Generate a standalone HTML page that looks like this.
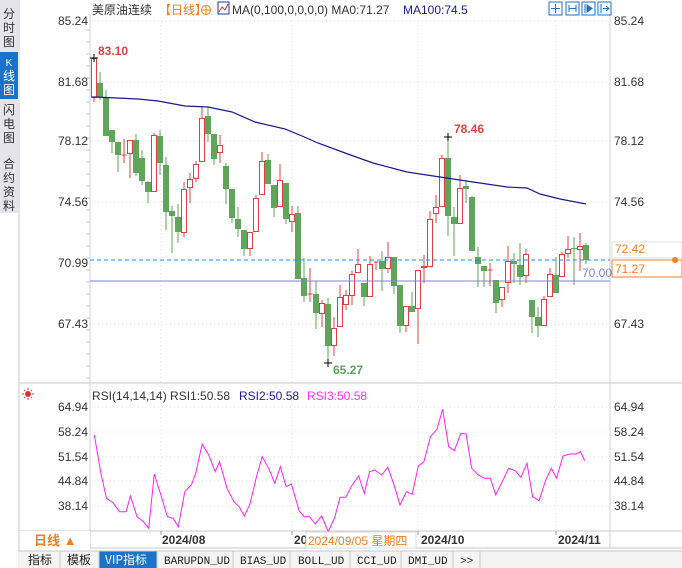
<!DOCTYPE html>
<html><head><meta charset="utf-8"><style>
html,body{margin:0;padding:0;background:#fff;}
body{width:682px;height:568px;position:relative;overflow:hidden;font-family:"Liberation Sans","Noto Sans CJK SC",sans-serif;}
svg{position:absolute;left:0;top:0;}
</style></head><body>
<svg id="s" width="682" height="568" xmlns="http://www.w3.org/2000/svg" font-family="Liberation Sans, Noto Sans CJK SC, sans-serif">
<rect x="0" y="0" width="18" height="213" fill="#e4e4ea"/>
<line x1="19" y1="0" x2="19" y2="552" stroke="#c8c8c8"/>
<rect x="0" y="52" width="18" height="47" fill="#1a73c8"/>
<g font-size="12" text-anchor="middle" fill="#333">
<text x="9" y="18">分</text><text x="9" y="32">时</text><text x="9" y="46">图</text>
<text x="9" y="66" fill="#fff" font-size="10">K</text><text x="9" y="80" fill="#fff">线</text><text x="9" y="94" fill="#fff">图</text>
<text x="9" y="114">闪</text><text x="9" y="128">电</text><text x="9" y="142">图</text>
<text x="9" y="168">合</text><text x="9" y="182">约</text><text x="9" y="196">资</text><text x="9" y="210">料</text>
</g>
<line x1="90" y1="14" x2="90" y2="548" stroke="#d0d0d0"/>
<line x1="610" y1="14" x2="610" y2="548" stroke="#d0d0d0"/>
<line x1="20" y1="383" x2="682" y2="383" stroke="#c8c8c8"/>
<line x1="20" y1="531" x2="682" y2="531" stroke="#c8c8c8"/>
<line x1="90" y1="548" x2="682" y2="548" stroke="#c8c8c8"/>
<g id="grid" stroke="#dcdcdc" stroke-dasharray="1,3"></g>
<g id="candles"></g>
<g font-size="12" fill="#333">
<text x="92" y="14">美原油连续</text>
<text x="159" y="14" fill="#f08020">【日线】</text>
<circle cx="206" cy="10" r="4.5" fill="none" stroke="#f08020"/><line x1="201" y1="10" x2="211" y2="10" stroke="#f08020"/><line x1="206" y1="5" x2="206" y2="15" stroke="#f08020"/>
<rect x="218" y="2" width="11" height="12" fill="#fff" stroke="#1a3c9c"/><path d="M219 12 L222 7 L225 10 L228 4" stroke="#e03030" fill="none"/>
<text x="232" y="14">MA(0,100,0,0,0,0) MA0:71.27</text>
<text x="403" y="14" fill="#1a1a9a">MA100:74.5</text>
</g>
<g stroke="#1a73c8" fill="none">
<rect x="549" y="2" width="13" height="13"/><rect x="566" y="2" width="13" height="13"/><rect x="582" y="2" width="13" height="13"/><rect x="598" y="2" width="13" height="13"/>
<path d="M555.5 4v9M551 8.5h9"/><path d="M569 5v7M576 5v7M569 8.5h7"/><path d="M585 4v9M587 5l5 3.5-5 3.5z" fill="#1a73c8"/><path d="M601 4v9M603 8.5h6M606 6l3 2.5-3 2.5"/>
</g>
<g font-size="12" fill="#333" id="labels"></g>
<text x="98" y="55" font-size="12" font-weight="bold" fill="#e04040">83.10</text>
<text x="454" y="133" font-size="12" font-weight="bold" fill="#e04040">78.46</text>
<text x="333" y="374" font-size="12" font-weight="bold" fill="#60a060">65.27</text>
<line x1="90" y1="260" x2="610" y2="260" stroke="#1a8cff" stroke-dasharray="4,3"/>
<line x1="90" y1="281" x2="610" y2="281" stroke="#8080e0"/>
<text x="582" y="277" font-size="12" fill="#8080e0">70.00</text>
<rect x="612" y="242" width="70" height="16" fill="#fff" stroke="#e0e0e0"/>
<text x="615" y="253" font-size="12" fill="#f08020">72.42</text>
<rect x="612" y="260" width="70" height="17" fill="#fff" stroke="#f08020"/>
<text x="615" y="273" font-size="12" fill="#f08020">71.27</text>
<circle cx="675" cy="260" r="3" fill="#f08020"/>
<g font-size="12">
<circle cx="28" cy="394" r="3" fill="#e03030"/><path d="M22 394h2M32 394h2M28 388v2M28 398v2M24 390l1 1M31 397l1 1M24 398l1-1M31 391l1-1" stroke="#e03030"/>
<text x="92" y="400" fill="#333">RSI(14,14,14) RSI1:50.58</text>
<text x="239" y="400" fill="#1a1aa0">RSI2:50.58</text>
<text x="307" y="400" fill="#ff30ff">RSI3:50.58</text>
</g>
<polyline id="rsi" fill="none" stroke="#ff20ff" stroke-width="1"/>
<rect x="20" y="531" width="70" height="17" fill="#fff"/>
<text x="34" y="545" font-size="13" font-weight="bold" fill="#f08020">日线 ▲</text>
<g font-size="12" font-weight="bold" fill="#333">
<text x="162" y="544">2024/08</text><text x="294" y="544">20</text><text x="421" y="544">2024/10</text><text x="558" y="544">2024/11</text>
</g>
<rect x="306" y="532" width="110" height="16" fill="#fff" stroke="#ddd"/>
<text x="308" y="545" font-size="12" fill="#f08020">2024/09/05 星期四</text>
<g stroke="#999"><line x1="161" y1="531" x2="161" y2="535"/><line x1="292" y1="531" x2="292" y2="535"/><line x1="418" y1="531" x2="418" y2="535"/><line x1="556" y1="531" x2="556" y2="535"/></g>
<rect x="18" y="551" width="664" height="17" fill="#f4f4f4"/>
<rect x="99" y="551" width="58" height="17" fill="#1a73c8"/>
<g stroke="#c8c8c8"><line x1="60" y1="551" x2="60" y2="568"/><line x1="99" y1="551" x2="99" y2="568"/><line x1="157" y1="551" x2="157" y2="568"/><line x1="233" y1="551" x2="233" y2="568"/><line x1="290" y1="551" x2="290" y2="568"/><line x1="350" y1="551" x2="350" y2="568"/><line x1="401" y1="551" x2="401" y2="568"/><line x1="453" y1="551" x2="453" y2="568"/><line x1="480" y1="551" x2="480" y2="568"/><line x1="18" y1="551" x2="682" y2="551"/></g>
<g font-size="12" fill="#222" font-family="Liberation Mono, Noto Sans CJK SC, monospace">
<text x="28" y="564" font-family="Noto Sans CJK SC, sans-serif">指标</text><text x="67" y="564" font-family="Noto Sans CJK SC, sans-serif">模板</text>
<text x="105" y="564" fill="#fff" font-family="Noto Sans CJK SC, sans-serif">VIP指标</text>
<text x="164" y="564" font-size="11">BARUPDN_UD</text><text x="240" y="564" font-size="11">BIAS_UD</text><text x="298" y="564" font-size="11">BOLL_UD</text><text x="357" y="564" font-size="11">CCI_UD</text><text x="408" y="564" font-size="11">DMI_UD</text><text x="460" y="564" font-size="11">&gt;&gt;</text>
</g>
</svg>
<script>
var NS="http://www.w3.org/2000/svg";
function el(p,t,a){var e=document.createElementNS(NS,t);for(var k in a)e.setAttribute(k,a[k]);p.appendChild(e);return e;}
var g=document.getElementById('grid'),L=document.getElementById('labels'),C=document.getElementById('candles');
[[21,"85.24"],[82,"81.68"],[141,"78.12"],[202,"74.56"],[263,"70.99"],[324,"67.43"]].forEach(function(a){
 if(a[1]!="70.99")el(g,'line',{x1:90,y1:a[0],x2:610,y2:a[0]});
 var t=el(L,'text',{x:88,y:a[0]+4,'text-anchor':'end'});t.textContent=a[1];
 if(a[1]!="70.99"){t=el(L,'text',{x:614,y:a[0]+4});t.textContent=a[1];}
});
[[407,"64.94"],[432,"58.24"],[457,"51.54"],[481,"44.84"],[506,"38.14"]].forEach(function(a){
 el(g,'line',{x1:90,y1:a[0],x2:610,y2:a[0]});
 var t=el(L,'text',{x:88,y:a[0]+4,'text-anchor':'end'});t.textContent=a[1];
 t=el(L,'text',{x:614,y:a[0]+4});t.textContent=a[1];
});
[161,292,418,556].forEach(function(x){el(g,'line',{x1:x,y1:21,x2:x,y2:531});});
for(var y=30;y<380;y+=12){el(C,'line',{x1:86,y1:y,x2:90,y2:y,stroke:'#ccc'});}
var cd=[[94,'r',58,98,56,102],[100,'g',83,97,72,100],[106,'g',97,136,90,136],[112,'g',130,142,130,153],[118,'g',142,155,142,172],[124,'r',155,155,139,163],[130,'r',140,154,140,178],[136,'g',140,173,134,176],[142,'g',158,181,150,185],[148,'g',182,192,181,203],[154,'r',135,192,133,192],[160,'g',136,163,130,175],[166,'g',165,212,157,230],[172,'g',211,216,206,253],[178,'g',217,232,204,243],[184,'r',189,233,182,237],[190,'r',179,188,173,203],[196,'r',164,179,161,182],[202,'r',118,162,107,162],[208,'g',116,134,107,142],[214,'g',134,159,134,165],[220,'r',145,153,135,163],[226,'g',166,189,163,204],[232,'g',189,218,189,223],[238,'g',219,229,207,237],[244,'g',230,249,230,256],[250,'r',232,249,232,256],[256,'r',198,232,195,232],[262,'r',161,195,152,195],[268,'g',160,184,154,184],[274,'g',185,208,185,217],[280,'r',180,207,164,207],[286,'g',183,219,183,224],[292,'r',214,222,206,232],[298,'g',213,279,206,279],[304,'g',278,296,258,302],[310,'r',294,294,268,302],[316,'g',294,313,281,329],[322,'r',303,314,300,327],[328,'g',304,346,298,363],[334,'r',328,346,317,356],[340,'r',297,327,285,327],[346,'r',295,305,290,310],[352,'r',274,296,271,305],[358,'r',264,273,249,273],[364,'g',283,297,283,306],[370,'r',264,297,256,297],[376,'r',262,262,262,270],[382,'g',261,269,251,291],[388,'r',257,269,242,273],[394,'g',257,286,257,294],[400,'g',285,326,285,333],[406,'r',306,326,306,332],[412,'g',306,312,292,312],[418,'r',270,309,270,344],[424,'r',266,268,255,283],[430,'r',219,267,211,267],[436,'r',207,214,195,223],[442,'r',158,207,155,207],[448,'g',158,216,137,236],[454,'g',217,224,207,256],[460,'r',188,224,175,224],[466,'g',186,189,180,203],[472,'g',197,251,196,251],[478,'g',257,264,247,287],[484,'g',266,271,266,287],[490,'r',270,270,263,286],[496,'g',280,303,280,313],[502,'r',287,300,287,307],[508,'r',261,283,246,293],[514,'g',261,264,253,283],[520,'g',265,277,243,285],[526,'r',254,276,249,283],[532,'g',300,317,300,333],[538,'g',317,326,307,337],[544,'r',299,326,296,326],[550,'r',274,297,268,297],[556,'g',275,293,257,293],[562,'r',254,277,252,277],[568,'r',249,254,236,258],[574,'g',248,249,237,285],[580,'r',246,250,233,271],[586,'g',245,260,243,264]];
cd.forEach(function(c){var col=c[1]=='r'?'#e04040':'#5fa55a';
 el(C,'line',{x1:c[0],y1:c[4],x2:c[0],y2:c[5],stroke:col});
 var h=Math.max(c[3]-c[2],1);
 if(c[1]=='r'){ if(h<=1) el(C,'line',{x1:c[0]-2.5,y1:c[2],x2:c[0]+2.5,y2:c[2],stroke:col}); else el(C,'rect',{x:c[0]-2.5,y:c[2]+.5,width:5,height:h-1,fill:'#fff',stroke:col});}
 else el(C,'rect',{x:c[0]-3,y:c[2],width:6,height:h,fill:col});
});
el(C,'path',{d:'M90 58h8M94 54v8M324 363h8M328 359v8M444 137h8M448 133v8',stroke:'#000'});
el(C,'polyline',{points:'92,97 95,97 138,99 158,101 185,106 208,107 232,112 255,122 285,129 302,136 318,143 345,153 373,163 407,172 440,177 473,182 507,187 527,188 540,194 560,199 586,204',fill:'none',stroke:'#1a1a8c','stroke-width':1.2});
var r=[[217,165],[232,280],[245,355],[260,368],[275,395],[290,395],[300,348],[315,410],[330,425],[342,445],[355,282],[370,345],[385,410],[398,415],[410,440],[425,335],[440,315],[450,280],[465,192],[480,225],[495,275],[505,245],[522,325],[538,365],[550,380],[562,408],[575,372],[590,290],[603,230],[618,265],[632,310],[645,260],[658,320],[670,312],[688,392],[700,410],[712,410],[725,432],[740,408],[755,455],[770,412],[782,352],[795,352],[810,315],[825,288],[838,340],[850,275],[862,270],[878,285],[892,262],[905,310],[920,375],[935,335],[948,343],[962,258],[975,245],[990,170],[1005,148],[1018,88],[1032,200],[1045,212],[1060,160],[1072,162],[1085,265],[1100,285],[1115,295],[1128,295],[1140,345],[1155,305],[1170,265],[1185,272],[1198,292],[1212,250],[1225,350],[1240,362],[1255,300],[1268,265],[1280,295],[1295,228],[1310,222],[1325,222],[1335,215],[1345,242]];
document.getElementById('rsi').setAttribute('points',r.map(function(p){return (p[0]/2.3).toFixed(1)+','+(380+p[1]/3).toFixed(1);}).join(' '));
</script>
</body></html>
